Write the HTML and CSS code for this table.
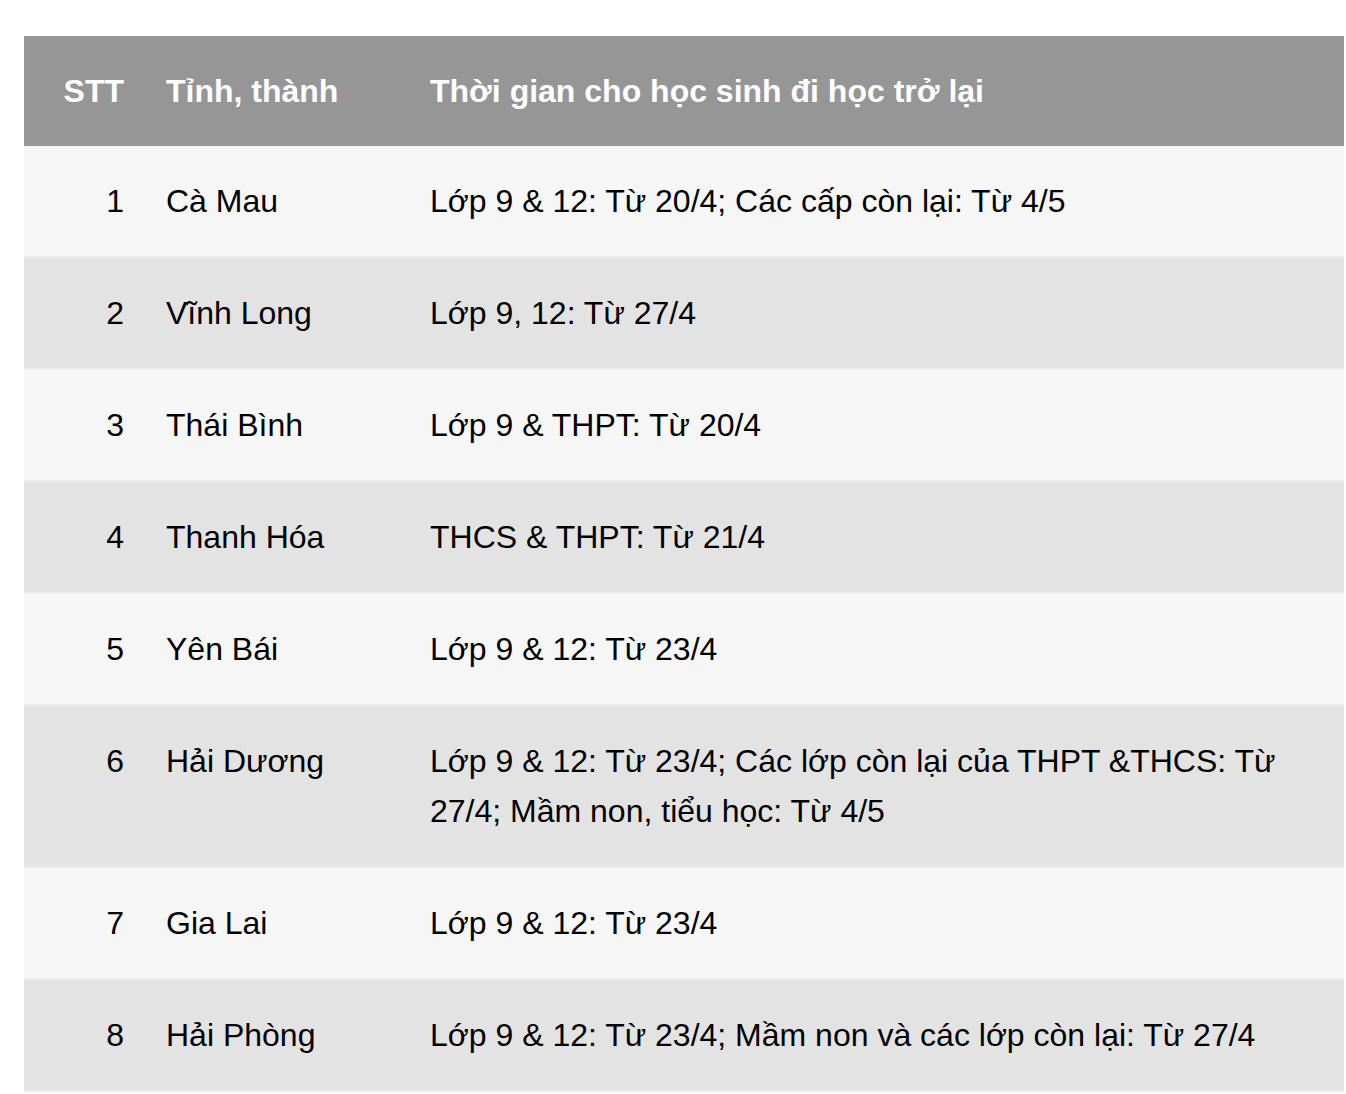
FILE: index.html
```html
<!DOCTYPE html>
<html lang="vi">
<head>
<meta charset="utf-8">
<title>Thời gian cho học sinh đi học trở lại</title>
<link rel="stylesheet" href="styles.css">
</head>
<body>
<table class="schedule">
  <thead>
    <tr>
      <th class="col-num">STT</th>
      <th class="col-prov">Tỉnh, thành</th>
      <th class="col-time">Thời gian cho học sinh đi học trở lại</th>
    </tr>
  </thead>
  <tbody>
    <tr><td class="num">1</td><td>Cà Mau</td><td>Lớp 9 &amp; 12: Từ 20/4; Các cấp còn lại: Từ 4/5</td></tr>
    <tr><td class="num">2</td><td>Vĩnh Long</td><td>Lớp 9, 12: Từ 27/4</td></tr>
    <tr><td class="num">3</td><td>Thái Bình</td><td>Lớp 9 &amp; THPT: Từ 20/4</td></tr>
    <tr><td class="num">4</td><td>Thanh Hóa</td><td>THCS &amp; THPT: Từ 21/4</td></tr>
    <tr><td class="num">5</td><td>Yên Bái</td><td>Lớp 9 &amp; 12: Từ 23/4</td></tr>
    <tr><td class="num">6</td><td>Hải Dương</td><td>Lớp 9 &amp; 12: Từ 23/4; Các lớp còn lại của THPT &amp;THCS: Từ 27/4; Mầm non, tiểu học: Từ 4/5</td></tr>
    <tr><td class="num">7</td><td>Gia Lai</td><td>Lớp 9 &amp; 12: Từ 23/4</td></tr>
    <tr><td class="num">8</td><td>Hải Phòng</td><td>Lớp 9 &amp; 12: Từ 23/4; Mầm non và các lớp còn lại: Từ 27/4</td></tr>
  </tbody>
</table>
</body>
</html>
```
FILE: styles.css
```css
html, body {
  margin: 0;
  padding: 0;
  background: #ffffff;
}
body {
  padding: 36px 0 0 24px;
  font-family: "Liberation Sans", Arial, Helvetica, sans-serif;
  font-size: 32px;
  line-height: 50px;
  color: #000000;
}
.schedule {
  width: 1320px;
  border-collapse: collapse;
  table-layout: fixed;
}
.schedule th,
.schedule td {
  box-sizing: border-box;
  padding: 30px 20px 30px 22px;
  text-align: left;
  vertical-align: top;
}
.schedule thead tr {
  background: #969696;
}
.schedule th {
  color: #ffffff;
  font-weight: bold;
}
.schedule .col-num {
  width: 120px;
  text-align: right;
}
.schedule .col-prov {
  width: 264px;
}
.schedule td.num {
  text-align: right;
}
.schedule tbody tr {
  border-bottom: 2px solid #ececec;
}
.schedule tbody tr:nth-child(odd) {
  background: #f6f6f6;
}
.schedule tbody tr:nth-child(even) {
  background: #e3e3e3;
}
```
